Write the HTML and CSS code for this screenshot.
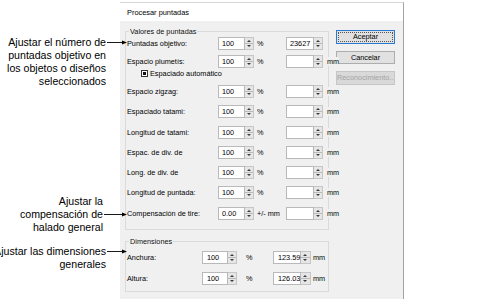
FILE: index.html
```html
<!DOCTYPE html>
<html lang="es">
<head>
<meta charset="utf-8">
<title>Procesar puntadas</title>
<link rel="stylesheet" href="styles.css">
</head>
<body>
<div class="page">
  <aside class="notes">
    <div class="note note-1">
      <div class="nl">Ajustar el número de<svg class="arrow a1" viewBox="0 0 20 5"><line x1="0" y1="2.5" x2="16" y2="2.5"/><polygon points="15,0.6 20,2.5 15,4.4"/></svg></div>
      <div class="nl">puntadas objetivo en</div>
      <div class="nl">los objetos o diseños</div>
      <div class="nl">seleccionados</div>
    </div>
    <div class="note note-2">
      <div class="nl">Ajustar la</div>
      <div class="nl">compensación de<svg class="arrow a2" viewBox="0 0 23 5"><line x1="0" y1="2.5" x2="19" y2="2.5"/><polygon points="18,0.6 23,2.5 18,4.4"/></svg></div>
      <div class="nl">halado general</div>
    </div>
    <div class="note note-3">
      <div class="nl">Ajustar las dimensiones<svg class="arrow a1" viewBox="0 0 20 5"><line x1="0" y1="2.5" x2="16" y2="2.5"/><polygon points="15,0.6 20,2.5 15,4.4"/></svg></div>
      <div class="nl">generales</div>
    </div>
  </aside>

  <div class="dialog">
    <div class="titlebar">Procesar puntadas</div>
    <div class="dbody">
      <div class="groups">
        <div class="group g1">
          <div class="gtitle">Valores de puntadas</div>
          <div class="row r-first">
            <span class="lbl">Puntadas objetivo:</span>
            <span class="fld f1"><span class="box">100</span><span class="spin"></span></span>
            <span class="u1">%</span>
            <span class="fld f2"><span class="box">23627</span><span class="spin"></span></span>
          </div>
          <div class="row r-plum">
            <span class="lbl">Espacio plumetís:</span>
            <span class="fld f1"><span class="box">100</span><span class="spin"></span></span>
            <span class="u1">%</span>
            <span class="fld f2"><span class="box"></span><span class="spin"></span></span>
            <span class="u2">mm</span>
          </div>
          <div class="cbrow"><span class="cb"></span><span>Espaciado automático</span></div>
          <div class="row r-after-cb">
            <span class="lbl">Espacio zigzag:</span>
            <span class="fld f1"><span class="box">100</span><span class="spin"></span></span>
            <span class="u1">%</span>
            <span class="fld f2"><span class="box"></span><span class="spin"></span></span>
            <span class="u2">mm</span>
          </div>
          <div class="row">
            <span class="lbl">Espaciado tatami:</span>
            <span class="fld f1"><span class="box">100</span><span class="spin"></span></span>
            <span class="u1">%</span>
            <span class="fld f2"><span class="box"></span><span class="spin"></span></span>
            <span class="u2">mm</span>
          </div>
          <div class="row">
            <span class="lbl">Longitud de tatami:</span>
            <span class="fld f1"><span class="box">100</span><span class="spin"></span></span>
            <span class="u1">%</span>
            <span class="fld f2"><span class="box"></span><span class="spin"></span></span>
            <span class="u2">mm</span>
          </div>
          <div class="row">
            <span class="lbl">Espac. de div. de</span>
            <span class="fld f1"><span class="box">100</span><span class="spin"></span></span>
            <span class="u1">%</span>
            <span class="fld f2"><span class="box"></span><span class="spin"></span></span>
            <span class="u2">mm</span>
          </div>
          <div class="row">
            <span class="lbl">Long. de div. de</span>
            <span class="fld f1"><span class="box">100</span><span class="spin"></span></span>
            <span class="u1">%</span>
            <span class="fld f2"><span class="box"></span><span class="spin"></span></span>
            <span class="u2">mm</span>
          </div>
          <div class="row">
            <span class="lbl">Longitud de puntada:</span>
            <span class="fld f1"><span class="box">100</span><span class="spin"></span></span>
            <span class="u1">%</span>
            <span class="fld f2"><span class="box"></span><span class="spin"></span></span>
            <span class="u2">mm</span>
          </div>
          <div class="row">
            <span class="lbl">Compensación de tire:</span>
            <span class="fld f1"><span class="box">0.00</span><span class="spin"></span></span>
            <span class="u1">+/- mm</span>
            <span class="fld f2"><span class="box"></span><span class="spin"></span></span>
            <span class="u2">mm</span>
          </div>
        </div>

        <div class="group g2">
          <div class="gtitle">Dimensiones</div>
          <div class="row drow">
            <span class="lbl dl">Anchura:</span>
            <span class="fld d1"><span class="box">100</span><span class="spin"></span></span>
            <span class="u1 du1">%</span>
            <span class="fld d2"><span class="box">123.59</span><span class="spin"></span></span>
            <span class="du2">mm</span>
          </div>
          <div class="row drow">
            <span class="lbl dl">Altura:</span>
            <span class="fld d1"><span class="box">100</span><span class="spin"></span></span>
            <span class="u1 du1">%</span>
            <span class="fld d2"><span class="box">126.03</span><span class="spin"></span></span>
            <span class="du2">mm</span>
          </div>
        </div>
      </div>

      <div class="buttons">
        <button class="btn btn-default" type="button">Aceptar</button>
        <button class="btn" type="button">Cancelar</button>
        <button class="btn" type="button" disabled>Reconocimiento...</button>
      </div>
    </div>
  </div>
</div>
</body>
</html>
```

FILE: styles.css
```css
* { box-sizing: border-box; }
html, body { margin: 0; padding: 0; background: #fff; }
body { font-family: "Liberation Sans", Arial, sans-serif; color: #000; }

.page {
  display: flex;
  width: 485px;
  height: 307px;
  overflow: hidden;
}

/* annotations */
.notes {
  width: 120px;
  flex: none;
  position: relative;
  z-index: 2;
  font-size: 10.6px;
  line-height: 13px;
}
.note { white-space: nowrap; }
.nl {
  position: relative;
  display: flex;
  justify-content: flex-end;
  height: 13px;
}
.note-1 { margin-top: 35.5px; padding-right: 14px; }
.note-2 { margin-top: 107px; padding-right: 17px; }
.note-3 { margin-top: 11px; padding-right: 14px; }

.arrow {
  position: absolute;
  left: 100%;
  top: 50%;
  margin-top: -2px;
  height: 5px;
  margin-left: 1px;
  overflow: visible;
}
.arrow line { stroke: #000; stroke-width: 0.9; }
.arrow polygon { fill: #000; }
.a1 { width: 20px; }
.a2 { width: 23px; }

/* dialog */
.dialog {
  width: 284px;
  height: 297px;
  margin-top: 2px;
  flex: none;
  display: flex;
  flex-direction: column;
  border-top: 1px solid #d6d6d6;
  border-right: 1px solid #a3a3a3;
  font-size: 7.3px;
}
.titlebar {
  height: 18px;
  flex: none;
  background: #fff;
  padding-left: 7px;
  display: flex;
  align-items: center;
  font-size: 7.4px;
}
.dbody {
  flex: 1;
  background: #f0f0f0;
  display: flex;
  align-items: flex-start;
  gap: 7px;
  padding: 10px 7px 0 5px;
}

.groups { width: 204px; flex: none; }

.group {
  position: relative;
  border: 1px solid #dadada;
  padding: 0 0 0 1px;
}
.g1 { height: 199px; padding-top: 5px; }
.g2 { height: 51px; margin-top: 11px; padding-top: 9px; }

.gtitle {
  position: absolute;
  top: -5px;
  left: 3px;
  padding: 0 1px;
  background: #f0f0f0;
  line-height: 9px;
  color: #111;
}

.row {
  display: flex;
  align-items: center;
  height: 13px;
  margin-top: 7.3px;
  white-space: nowrap;
}
.r-first { margin-top: 0; }
.r-plum { margin-top: 5px; }
.r-after-cb { margin-top: 8px; }
.drow { margin-top: 7.5px; }
.g2 .gtitle + .drow { margin-top: 0; }

.lbl { width: 91px; flex: none; }
.dl { width: 75px; }

.fld { display: flex; flex: none; height: 13px; }
.box {
  flex: none;
  height: 13px;
  background: #fff;
  border: 1px solid #b9b9b9;
  padding-left: 3px;
  line-height: 11px;
}
.spin {
  flex: none;
  width: 9px;
  height: 13px;
  position: relative;
  border: 1px solid #c6c6c6;
  border-left: none;
  background: linear-gradient(to bottom, #e6e6e6 0 5px, #b9b9b9 5px 6px, #e6e6e6 6px);
}
.spin::before,
.spin::after {
  content: "";
  position: absolute;
  left: 2px;
  border-left: 2px solid transparent;
  border-right: 2px solid transparent;
}
.spin::before { top: 2px; border-bottom: 2px solid #3a3a3a; }
.spin::after { bottom: 2px; border-top: 2px solid #3a3a3a; }

.f1 .box { width: 27px; }
.f2 .box { width: 28px; }
.d1 .box { width: 26px; padding-left: 4px; }
.d2 .box { width: 28px; padding-left: 4px; }
.d2 .spin { width: 10px; }

.u1 { width: 32px; flex: none; padding-left: 3px; }
.du1 { width: 36px; padding-left: 9px; }
.u2 {
  flex: none;
  margin-left: 4px;
  background: #f0f0f0;
  position: relative;
  z-index: 1;
}
.du2 { flex: none; margin-left: 2px; }

.cbrow {
  display: flex;
  align-items: center;
  height: 8px;
  margin-top: 1px;
  padding-left: 14px;
  gap: 2px;
  white-space: nowrap;
}
.cb {
  width: 7px;
  height: 7px;
  border: 1px solid #333;
  background: #fff;
  position: relative;
  flex: none;
}
.cb::after {
  content: "";
  position: absolute;
  inset: 1px;
  background: #111;
}

/* buttons */
.buttons {
  display: flex;
  flex-direction: column;
  gap: 7px;
  margin-top: -1px;
  width: 59px;
  flex: none;
}
.btn {
  height: 13.5px;
  width: 59px;
  padding: 0;
  margin: 0;
  font-family: inherit;
  font-size: 7.3px;
  line-height: 11px;
  color: #000;
  background: #e1e1e1;
  border: 1px solid #adadad;
  border-radius: 0;
  white-space: nowrap;
  overflow: hidden;
}
.btn-default {
  border-color: #2a7ad2;
  outline: 1px dotted #555;
  outline-offset: -3px;
}
.btn:disabled {
  color: #a3a3a3;
  background: #d9d9d9;
  border-color: #c6c6c6;
}
```
